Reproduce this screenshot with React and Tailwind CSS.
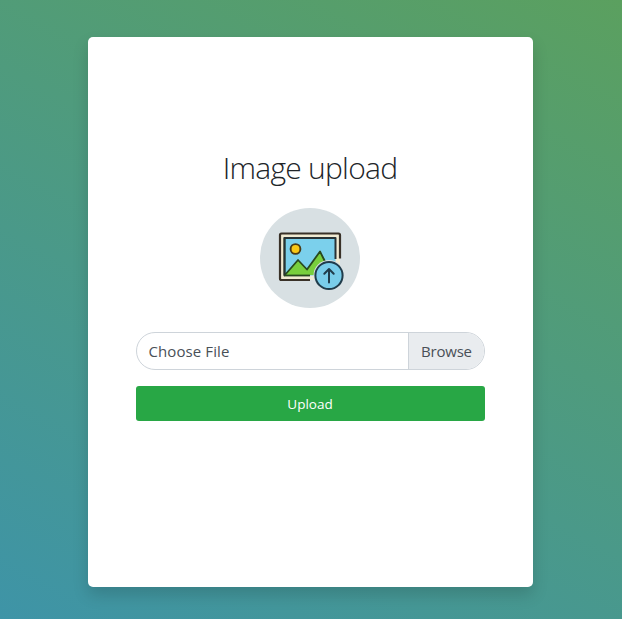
function UploadIllustration() {
  return (
    <svg className="size-[100px]" viewBox="0 0 100 100" fill="none" strokeLinejoin="round" strokeLinecap="round">
      <circle cx="50" cy="50" r="50" fill="#d8e0e3" />
      <rect x="20" y="26" width="60" height="46" rx="1.5" fill="#f1ebd3" />
      <path d="M24.5 30H75.5V67.500H24.5Z" fill="#7bd0ec" />
      <path d="M25 67 38 52 47 61.500 60 43.500 69 58V67Z" fill="#78cf3d" />
      <path d="M24.500 30V67.500L38 52 47 61.500 60 43.500 65 53.500" stroke="#28491f" strokeWidth="1.800" />
      <path d="M75.500 51V30H24.500V67.500" stroke="#283235" strokeWidth="2" strokeLinecap="butt" />
      <path d="M24.500 67.500H50" stroke="#28491f" strokeWidth="1.800" strokeLinecap="butt" />
      <path d="M80 50.500V27Q80 25.500 78.500 25.500H21.500Q20 25.500 20 27V70.500Q20 72 21.500 72H50" stroke="#393128" strokeWidth="2.200" strokeLinecap="butt" />
      <circle cx="35.500" cy="41" r="4.900" fill="#f8c715" stroke="#4b3b17" strokeWidth="1.900" />
      <circle cx="69" cy="67.500" r="15.500" fill="#d8e0e3" />
      <circle cx="69" cy="67.500" r="13.600" fill="#79cdea" stroke="#203c4b" strokeWidth="2" />
      <path d="M69 74.500V61M64.300 65.700 69 61 73.700 65.700" stroke="#203c4b" strokeWidth="2" />
    </svg>
  );
}

export default function App() {
  return (
    <main className="flex h-[619px] w-[622px] justify-center bg-[linear-gradient(28deg,#3e94a7_0%,#5ba05f_100%)] pt-[37px] pr-px font-['Open_Sans','Noto_Sans',sans-serif]">
      <section className="flex h-[550px] w-[445px] flex-col rounded-[5px] bg-white px-12 pt-[112px] shadow-[0_8px_16px_rgba(0,0,0,0.15)]">
        <h1 className="h-[38px] pr-px text-center whitespace-nowrap text-[30px] leading-[38px] font-light tracking-[-0.75px] text-[#212529]">Image upload</h1>
        <div className="mt-[21px] ml-[124px]">
          <UploadIllustration />
        </div>
        <label className="mt-6 flex h-[38px] w-full shrink-0 overflow-hidden rounded-full border border-[#ced4da] text-[15px] leading-9 text-[#495057]">
          <span className="flex-1 pl-[11.500px] tracking-[0.1px]">Choose File</span>
          <span className="w-[76px] border-l border-[#ced4da] bg-[#e9ecef] pl-3 tracking-[-0.2px]">Browse</span>
        </label>
        <button className="mt-4 h-[35px] w-full shrink-0 rounded-[3px] bg-[#28a745] pr-px text-[13.500px] leading-[36px] font-medium text-white">Upload</button>
      </section>
    </main>
  );
}
